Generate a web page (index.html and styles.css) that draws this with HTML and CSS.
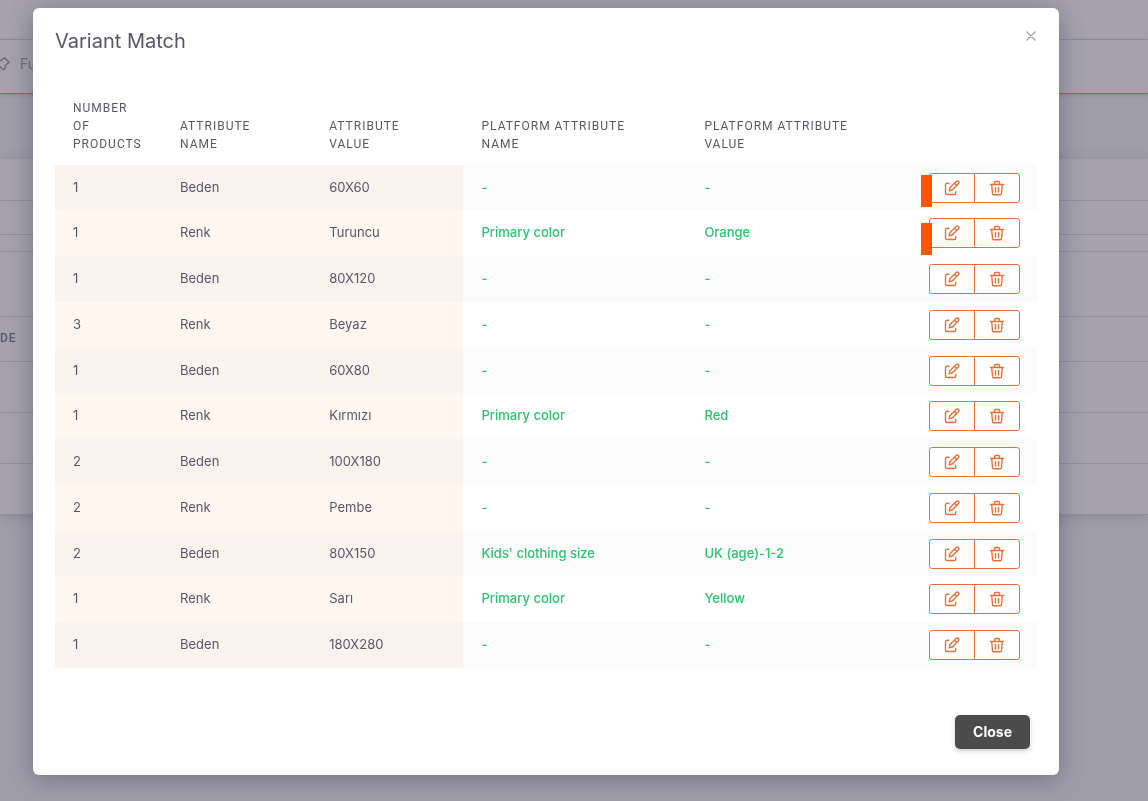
FILE: index.html
```html
<!DOCTYPE html>
<html lang="en">
<head>
<meta charset="utf-8">
<title>Variant Match</title>
<link rel="stylesheet" href="styles.css">
</head>
<body>
<svg class="sprite" aria-hidden="true">
  <symbol id="edit" viewBox="0 0 16 16"><path d="M4.800 3.200H3A1.500 1.500 0 0 0 1.500 4.700V13A1.500 1.500 0 0 0 3 14.500H10.300A1.500 1.500 0 0 0 11.800 13V11.500M5.200 10.800l.6-3L12.200 1.500a1.500 1.500 0 0 1 2.200 2.200L8.200 10zM10.600 3.200l2.200 2.200"/></symbol>
  <symbol id="trash" viewBox="0 0 16 16"><path d="M1.500 4.500h13M5.500 4.500V2.500a1 1 0 0 1 1-1h3a1 1 0 0 1 1 1v2M2.700 4.500l.8 9a1.300 1.300 0 0 0 1.300 1.200h6.400a1.300 1.300 0 0 0 1.300-1.200l.8-9M6.500 7.500v4.500M9.500 7.500v4.500"/></symbol>
</svg>

<div class="page" aria-hidden="true">
  <div class="topbar"></div>
  <div class="tabs">
    <svg class="pin" viewBox="0 0 16 16"><path d="M10.500 1.800l4.500 4.500-3.700 3.200-.5 3.300-1.500 1L1.500 6.500 3 5l3.800-.3z"/></svg>
    <span>Full</span>
  </div>
  <div class="gap"></div>
  <div class="card">
    <div class="line h42"></div>
    <div class="line h34"></div>
    <div class="line h17"></div>
    <div class="line h65"></div>
    <div class="line h45">DE</div>
    <div class="line h51"></div>
    <div class="line h51"></div>
    <div class="line h51"></div>
  </div>
</div>

<div class="overlay">
  <section class="modal" role="dialog" aria-labelledby="title">
    <header class="modal-head">
      <h1 id="title">Variant Match</h1>
      <button class="dismiss" type="button" aria-label="Dismiss"><svg viewBox="0 0 10 10"><path d="M1 1l8 8M9 1L1 9"/></svg></button>
    </header>
    <table class="variants">
      <colgroup><col class="c1"><col class="c2"><col class="c3"><col class="c4"><col class="c5"><col class="c6"></colgroup>
      <thead>
        <tr><th>Number<br>of<br>products</th><th>Attribute<br>name</th><th>Attribute<br>value</th><th>Platform attribute<br>name</th><th>Platform attribute<br>value</th><td></td></tr>
      </thead>
      <tbody id="rows"></tbody>
    </table>
    <footer class="modal-foot"><button class="close" type="button">Close</button></footer>
  </section>
</div>
<script src="rows.js"></script>
</body>
</html>
```
FILE: rows.js
```js
const data = [
  ["1", "Beden", "60X60", "-", "-", "mark"],
  ["1", "Renk", "Turuncu", "Primary color", "Orange", "mark low"],
  ["1", "Beden", "80X120", "-", "-"],
  ["3", "Renk", "Beyaz", "-", "-"],
  ["1", "Beden", "60X80", "-", "-"],
  ["1", "Renk", "Kırmızı", "Primary color", "Red"],
  ["2", "Beden", "100X180", "-", "-"],
  ["2", "Renk", "Pembe", "-", "-"],
  ["2", "Beden", "80X150", "Kids' clothing size", "UK (age)-1-2"],
  ["1", "Renk", "Sarı", "Primary color", "Yellow"],
  ["1", "Beden", "180X280", "-", "-"]
];
document.getElementById("rows").innerHTML = data.map(([count, name, value, pName, pValue, mark]) => `
  <tr>
    <td class="own">${count}</td><td class="own">${name}</td><td class="own">${value}</td>
    <td class="platform">${pName}</td><td class="platform">${pValue}</td>
    <td class="actions"><div class="group">
      <button type="button" aria-label="Edit"><svg><use href="#edit"/></svg></button>
      <button type="button" aria-label="Delete"><svg><use href="#trash"/></svg></button>
    </div>${mark ? `<span class="${mark}"></span>` : ""}</td>
  </tr>`).join("");
```
FILE: styles.css
```css
* { box-sizing: border-box; }
body {
  margin: 0;
  min-height: 100vh;
  background: #a09daa;
  color: #5a566a;
  font: 13px/20px Inter, "Liberation Sans", sans-serif;
}
button { font: inherit; cursor: pointer; }
svg { fill: none; stroke: currentColor; stroke-linecap: round; stroke-linejoin: round; }
.sprite { position: absolute; width: 0; height: 0; }

.page { position: fixed; inset: 0; overflow: hidden; }
.topbar { height: 40px; background: #a5a2ad; border-bottom: 1px solid #918e9c; }
.tabs {
  display: flex;
  align-items: center;
  gap: 10px;
  height: 54px;
  padding-bottom: 5px;
  background: #a5a2ad;
  border-bottom: 1px solid #a35f50;
  box-shadow: 0 1px 4px rgba(70, 65, 85, .2);
  color: #6d697a;
}
.tabs span { font-size: 14px; }
.pin { width: 16px; height: 16px; margin-left: -6px; stroke-width: 1.5; }
.gap { height: 65px; }
.card { background: #a5a2ad; box-shadow: 0 2px 12px rgba(70, 65, 85, .2); }
.line { border-bottom: 1px solid #918e9c; font: 500 12px/42px Roboto, "Liberation Sans", sans-serif; letter-spacing: 1px; }
.h42 { height: 42px; }
.h34 { height: 34px; }
.h17 { height: 17px; }
.h65 { height: 65px; }
.h45 { height: 45px; }
.h51 { height: 51px; }

.overlay { position: relative; padding: 8px 89px 26px 33px; }
.modal {
  padding: 20px 22px 26px;
  background: #fff;
  border-radius: 6px;
  box-shadow: 0 4px 24px rgba(60, 60, 85, .45);
}
.modal-head { display: flex; justify-content: space-between; align-items: flex-start; margin-bottom: 42px; }
h1 { margin: 0; font-size: 20px; line-height: 26px; font-weight: 400; }
.dismiss { display: flex; padding: 3px 1px; border: 0; background: none; color: #aaa8b4; }
.dismiss svg { width: 10px; height: 10px; stroke-width: 1.5; }

.variants { width: 100%; table-layout: fixed; border-collapse: collapse; }
.c1 { width: 10.9%; }
.c2 { width: 15.2%; }
.c3 { width: 15.5%; }
.c4 { width: 22.7%; }
.c5 { width: 22.9%; }
.c6 { width: 12.8%; }
th {
  padding: 3px 18px 12px;
  font: 400 12px/18px Roboto, "Liberation Sans", sans-serif;
  letter-spacing: 1px;
  text-align: left;
  text-transform: uppercase;
  vertical-align: bottom;
}
tbody tr { height: 46px; }
tbody tr:nth-child(4n+1) { height: 45px; }
tbody tr:nth-child(odd) { background: #fbfbfb; }
tbody td { padding: 0 18px 2px; }
.own { background: #fff7f0; }
tr:nth-child(odd) .own { background: #fbf3ee; }
.platform { color: #28c76f; font-weight: 500; }
tbody .actions { position: relative; padding: 0 17px 0 18px; }
.group { display: flex; height: 30px; border: 1px solid #ea6f37; border-radius: 3px; background: #fff; }
.group button {
  flex: 1;
  display: flex;
  align-items: center;
  justify-content: center;
  padding: 0;
  border: 0;
  background: none;
  color: #ea6f37;
}
.group button + button { border-left: 1px solid #ea6f37; }
.group svg { width: 16px; height: 16px; stroke-width: 1.4; }
.mark { position: absolute; left: 10px; top: 10px; width: 11px; height: 32px; background: #ff5400; }
.low { top: 13px; }

.modal-foot { display: flex; justify-content: flex-end; padding: 47px 7px 0; }
.close {
  height: 34px;
  padding: 0 18px;
  border: 0;
  border-radius: 5px;
  background: #4b4b4b;
  box-shadow: 0 2px 4px rgba(60, 60, 70, .25);
  color: #fff;
  font-size: 14px;
  font-weight: 700;
}
```
